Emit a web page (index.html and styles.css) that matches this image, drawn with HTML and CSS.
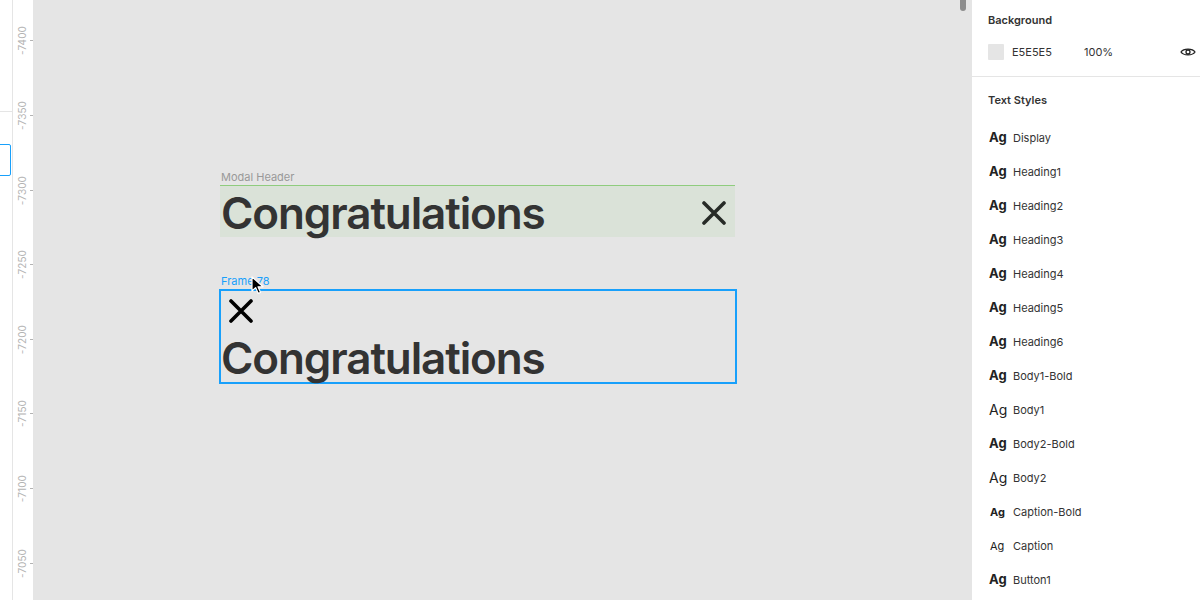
FILE: index.html
```html
<!DOCTYPE html>
<html lang="en">
<head>
<meta charset="utf-8">
<title>Canvas</title>
<link rel="stylesheet" href="styles.css">
</head>
<body>
<div class="app">
  <div class="leftpanel">
    <div class="lp-top"></div>
    <div class="lp-input"></div>
  </div>
  <div class="ruler">
    <div class="mark"><span class="mark-label">-7400</span><span class="tick"></span></div>
    <div class="mark"><span class="mark-label">-7350</span><span class="tick"></span></div>
    <div class="mark"><span class="mark-label">-7300</span><span class="tick"></span></div>
    <div class="mark"><span class="mark-label">-7250</span><span class="tick"></span></div>
    <div class="mark"><span class="mark-label">-7200</span><span class="tick"></span></div>
    <div class="mark"><span class="mark-label">-7150</span><span class="tick"></span></div>
    <div class="mark"><span class="mark-label">-7100</span><span class="tick"></span></div>
    <div class="mark"><span class="mark-label">-7050</span><span class="tick"></span></div>
  </div>
  <main class="canvas">
    <div class="node node-header">
      <div class="node-label">Modal Header</div>
      <div class="modal-header">
        <span class="congrats">Congratulations</span>
        <svg class="x-icon x-dark" width="24" height="24" viewBox="0 0 24 24"><path d="M2 2 L22 22 M22 2 L2 22" fill="none" stroke="currentColor" stroke-width="3.6" stroke-linecap="round"/></svg>
      </div>
    </div>
    <div class="node node-frame">
      <div class="node-label node-label-sel">Frame 78</div>
      <div class="frame">
        <svg class="x-icon x-black" width="24" height="24" viewBox="0 0 24 24"><path d="M2 2 L22 22 M22 2 L2 22" fill="none" stroke="currentColor" stroke-width="3.6" stroke-linecap="round"/></svg>
        <span class="congrats">Congratulations</span>
      </div>
    </div>
    <svg class="cursor" width="14" height="20" viewBox="0 0 14 20"><path d="M1 1 L1 15 L4.6 11.6 L7.2 17.4 L9.6 16.4 L7 10.8 L12 10.8 Z" fill="#000" stroke="#fff" stroke-width="1.2" stroke-linejoin="round"/></svg>
    <div class="scroll-thumb"></div>
  </main>
  <aside class="panel">
    <section class="section section-bg">
      <h2 class="section-title">Background</h2>
      <div class="bg-row">
        <span class="swatch"></span>
        <span class="hex">E5E5E5</span>
        <span class="opacity">100%</span>
        <svg class="eye" width="16" height="10" viewBox="0 0 16 10"><path d="M1 5 C3.5 1.2 12.5 1.2 15 5 C12.5 8.8 3.5 8.8 1 5 Z" fill="none" stroke="#222" stroke-width="1.3"/><circle cx="8" cy="5" r="2" fill="none" stroke="#222" stroke-width="1.3"/></svg>
      </div>
    </section>
    <section class="section section-styles">
      <h2 class="section-title">Text Styles</h2>
      <ul class="styles">
        <li class="style"><span class="ag ag-bold">Ag</span><span class="style-name">Display</span></li>
        <li class="style"><span class="ag ag-bold">Ag</span><span class="style-name">Heading1</span></li>
        <li class="style"><span class="ag ag-bold">Ag</span><span class="style-name">Heading2</span></li>
        <li class="style"><span class="ag ag-bold">Ag</span><span class="style-name">Heading3</span></li>
        <li class="style"><span class="ag ag-bold">Ag</span><span class="style-name">Heading4</span></li>
        <li class="style"><span class="ag ag-bold">Ag</span><span class="style-name">Heading5</span></li>
        <li class="style"><span class="ag ag-bold">Ag</span><span class="style-name">Heading6</span></li>
        <li class="style"><span class="ag ag-bold">Ag</span><span class="style-name">Body1-Bold</span></li>
        <li class="style"><span class="ag ag-regular">Ag</span><span class="style-name">Body1</span></li>
        <li class="style"><span class="ag ag-bold">Ag</span><span class="style-name">Body2-Bold</span></li>
        <li class="style"><span class="ag ag-regular">Ag</span><span class="style-name">Body2</span></li>
        <li class="style"><span class="ag ag-small-bold">Ag</span><span class="style-name">Caption-Bold</span></li>
        <li class="style"><span class="ag ag-small">Ag</span><span class="style-name">Caption</span></li>
        <li class="style"><span class="ag ag-bold">Ag</span><span class="style-name">Button1</span></li>
      </ul>
    </section>
  </aside>
</div>
</body>
</html>
```

FILE: styles.css
```css
* { box-sizing: border-box; }
html, body {
  margin: 0;
  padding: 0;
  width: 1200px;
  height: 600px;
  overflow: hidden;
  font-family: Inter, "Noto Sans", "Liberation Sans", sans-serif;
  color: #333;
}
.app {
  display: flex;
  width: 1200px;
  height: 600px;
}

/* partially visible left panel */
.leftpanel {
  width: 13px;
  flex: none;
  background: #fff;
  border-right: 1px solid #e5e5e5;
  padding-top: 111px;
}
.lp-top {
  height: 1px;
  background: #e5e5e5;
}
.lp-input {
  margin-top: 32px;
  margin-left: -4px;
  width: 15px;
  height: 32px;
  border: 1px solid #18a0fb;
  border-radius: 2px;
}

/* ruler */
.ruler {
  width: 20px;
  flex: none;
  background: #fff;
  display: flex;
  flex-direction: column;
  padding-top: 3.7px;
}
.mark {
  height: 74.6px;
  flex: none;
  display: flex;
  align-items: center;
  justify-content: flex-end;
  gap: 3px;
}
.mark-label {
  writing-mode: vertical-rl;
  transform: rotate(180deg);
  font-size: 10px;
  line-height: 10px;
  color: #b3b3b3;
  letter-spacing: 0.1px;
}
.tick {
  width: 3px;
  height: 1px;
  background: #b3b3b3;
}

/* canvas */
.canvas {
  flex: 1;
  position: relative;
  background: #e5e5e5;
  overflow: hidden;
}
.node {
  position: absolute;
  display: flex;
  flex-direction: column;
}
.node-header { left: 187px; top: 171px; }
.node-frame { left: 186px; top: 275px; }
.node-label {
  font-size: 11px;
  line-height: 13px;
  height: 14px;
  color: #999;
  padding-left: 1px;
}
.node-frame .node-label { padding-left: 2px; }
.node-label-sel { color: #18a0fb; }

.congrats {
  font-size: 44px;
  line-height: 52px;
  font-weight: 600;
  color: #333;
  letter-spacing: -1.1px;
  white-space: nowrap;
}
.modal-header {
  width: 515px;
  height: 52px;
  background: #dae2d8;
  border-top: 1px solid #8fcc7e;
  display: flex;
  align-items: center;
  justify-content: space-between;
  padding-left: 1px;
  padding-right: 9px;
}
.modal-header .congrats { margin-top: 2px; }
.x-icon { display: block; flex: none; }
.x-dark { color: #272b27; margin-top: 2px; }
.x-black { color: #000; }

.frame {
  width: 518px;
  height: 95px;
  border: 2px solid #18a0fb;
  display: flex;
  flex-direction: column;
  align-items: flex-start;
  padding: 8px 0 0 8px;
}
.frame .x-icon { margin-bottom: 9px; }
.frame .congrats { margin-left: -8px; }

.cursor {
  position: absolute;
  left: 218px;
  top: 276px;
}
.scroll-thumb {
  position: absolute;
  left: 927px;
  top: -6px;
  width: 6px;
  height: 17px;
  border-radius: 3px;
  background: #8d8d8d;
}

/* right panel */
.panel {
  width: 228px;
  flex: none;
  background: #fff;
}
.section { padding-left: 16px; padding-right: 4px; }
.section-bg {
  padding-top: 12px;
  height: 77px;
  border-bottom: 1px solid #e5e5e5;
}
.section-title {
  margin: 0;
  font-size: 11px;
  line-height: 16px;
  font-weight: 600;
  color: #333;
}
.bg-row {
  margin-top: 16px;
  height: 16px;
  display: flex;
  align-items: center;
}
.swatch {
  width: 16px;
  height: 16px;
  background: #e5e5e5;
  border-radius: 1px;
  flex: none;
}
.hex {
  margin-left: 8px;
  width: 72px;
  font-size: 11px;
  color: #333;
}
.opacity {
  font-size: 11px;
  color: #333;
}
.eye { margin-left: auto; display: block; }

.section-styles { padding-top: 15px; }
.styles {
  list-style: none;
  margin: 13px 0 0;
  padding: 0;
}
.style {
  height: 34px;
  display: flex;
  align-items: center;
}
.ag {
  width: 25px;
  flex: none;
  padding-left: 1px;
  color: #222;
  margin-top: -2px;
}
.ag-bold { font-size: 13px; font-weight: 700; }
.ag-regular { font-size: 14px; font-weight: 400; }
.ag-small-bold { font-size: 11px; font-weight: 700; padding-left: 2px; margin-top: 0; }
.ag-small { font-size: 11px; font-weight: 400; padding-left: 2px; margin-top: 0; }
.style-name {
  font-size: 11px;
  color: #333;
}
```
